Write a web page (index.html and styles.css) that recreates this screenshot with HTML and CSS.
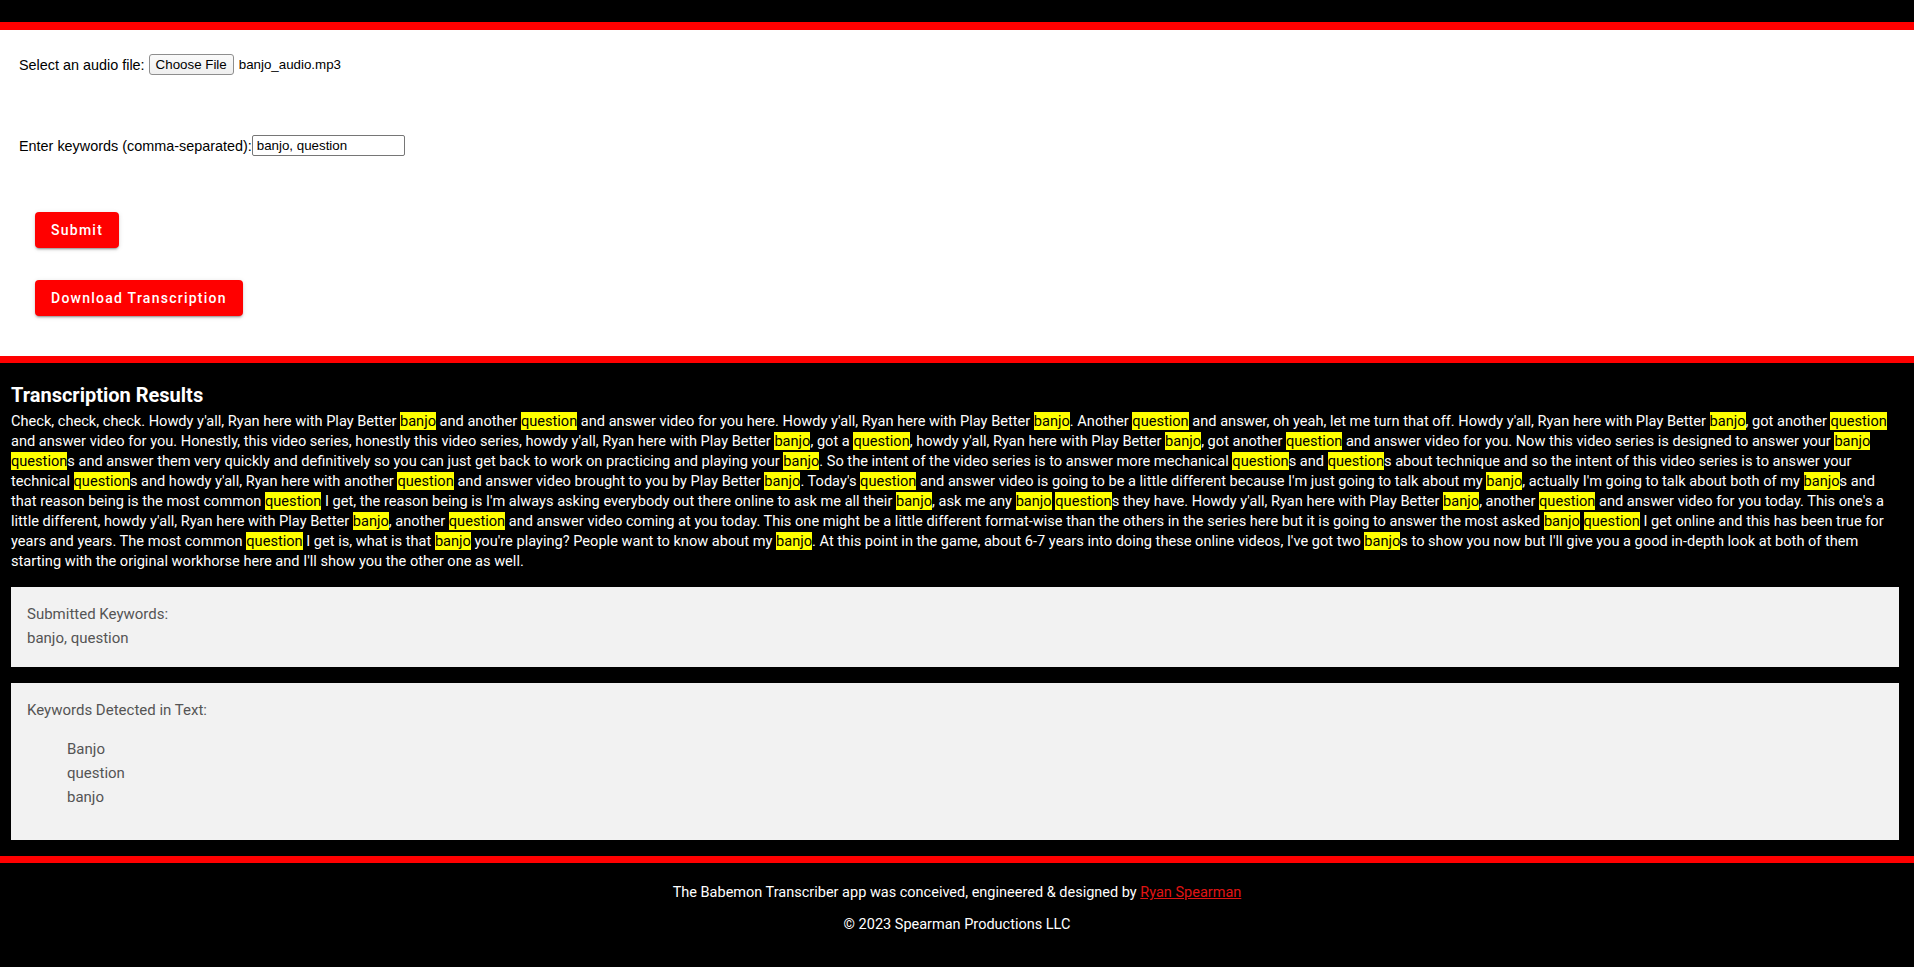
FILE: index.html
```html
<!DOCTYPE html>
<html lang="en">
<head>
<meta charset="utf-8">
<title>Babemon Transcriber</title>
<link rel="stylesheet" href="styles.css">
</head>
<body>
<header class="topbar"></header>

<main class="upload">
  <div class="field">
    <label class="field-label">Select an audio file:</label>
    <button type="button" class="file-btn">Choose File</button>
    <span class="file-name">banjo_audio.mp3</span>
  </div>
  <div class="field field-keywords">
    <label class="field-label label-tight" for="kw">Enter keywords (comma-separated):</label>
    <input id="kw" class="text-input" type="text" value="banjo, question">
  </div>
  <div class="actions">
    <button type="button" class="btn">Submit</button>
    <button type="button" class="btn">Download Transcription</button>
  </div>
</main>

<section class="results">
  <h2 class="results-title">Transcription Results</h2>
  <p class="transcript">Check, check, check. Howdy y'all, Ryan here with Play Better <mark class="hl">banjo</mark> and another <mark class="hl">question</mark> and answer video for you here. Howdy y'all, Ryan here with Play Better <mark class="hl">banjo</mark>. Another <mark class="hl">question</mark> and answer, oh yeah, let me turn that off. Howdy y'all, Ryan here with Play Better <mark class="hl">banjo</mark>, got another <mark class="hl">question</mark> and answer video for you. Honestly, this video series, honestly this video series, howdy y'all, Ryan here with Play Better <mark class="hl">banjo</mark>, got a <mark class="hl">question</mark>, howdy y'all, Ryan here with Play Better <mark class="hl">banjo</mark>, got another <mark class="hl">question</mark> and answer video for you. Now this video series is designed to answer your <mark class="hl">banjo</mark> <mark class="hl">question</mark>s and answer them very quickly and definitively so you can just get back to work on practicing and playing your <mark class="hl">banjo</mark>. So the intent of the video series is to answer more mechanical <mark class="hl">question</mark>s and <mark class="hl">question</mark>s about technique and so the intent of this video series is to answer your technical <mark class="hl">question</mark>s and howdy y'all, Ryan here with another <mark class="hl">question</mark> and answer video brought to you by Play Better <mark class="hl">banjo</mark>. Today's <mark class="hl">question</mark> and answer video is going to be a little different because I'm just going to talk about my <mark class="hl">banjo</mark>, actually I'm going to talk about both of my <mark class="hl">banjo</mark>s and that reason being is the most common <mark class="hl">question</mark> I get, the reason being is I'm always asking everybody out there online to ask me all their <mark class="hl">banjo</mark>, ask me any <mark class="hl">banjo</mark> <mark class="hl">question</mark>s they have. Howdy y'all, Ryan here with Play Better <mark class="hl">banjo</mark>, another <mark class="hl">question</mark> and answer video for you today. This one's a little different, howdy y'all, Ryan here with Play Better <mark class="hl">banjo</mark>, another <mark class="hl">question</mark> and answer video coming at you today. This one might be a little different format-wise than the others in the series here but it is going to answer the most asked <mark class="hl">banjo</mark> <mark class="hl">question</mark> I get online and this has been true for years and years. The most common <mark class="hl">question</mark> I get is, what is that <mark class="hl">banjo</mark> you're playing? People want to know about my <mark class="hl">banjo</mark>. At this point in the game, about 6-7 years into doing these online videos, I've got two <mark class="hl">banjo</mark>s to show you now but I'll give you a good in-depth look at both of them starting with the original workhorse here and I'll show you the other one as well.</p>

  <div class="panel">
    <div class="panel-title">Submitted Keywords:</div>
    <div class="panel-value">banjo, question</div>
  </div>

  <div class="panel panel-detected">
    <div class="panel-title">Keywords Detected in Text:</div>
    <ul class="kw-list">
      <li>Banjo</li>
      <li>question</li>
      <li>banjo</li>
    </ul>
  </div>
</section>

<footer class="footer">
  <p class="footer-line">The Babemon Transcriber app was conceived, engineered &amp; designed by <a class="footer-link" href="#">Ryan Spearman</a></p>
  <p class="footer-line footer-copy">© 2023 Spearman Productions LLC</p>
</footer>
</body>
</html>
```

FILE: styles.css
```css
* {
  box-sizing: border-box;
}

html, body {
  margin: 0;
  padding: 0;
}

body {
  background: #ffffff;
  font-family: Roboto, "Liberation Sans", Arial, sans-serif;
  color: #000;
}

.topbar {
  height: 30px;
  background: #000;
  border-bottom: 8px solid #ff0000;
}

/* upload form */
.upload {
  display: flex;
  flex-direction: column;
  align-items: flex-start;
  padding: 24px 0 40px 19px;
  background: #fff;
}

.field {
  display: flex;
  align-items: center;
  height: 21px;
}

.field-keywords {
  margin-top: 60px;
}

.field-label {
  font-family: "Liberation Sans", Arial, sans-serif;
  font-size: 14.4px;
  color: #000;
  margin-right: 4px;
}

.label-tight {
  margin-right: 0;
}

.file-btn {
  font-family: "Liberation Sans", Arial, sans-serif;
  font-size: 13.33px;
  color: #000;
  height: 21px;
  padding: 1px 6px;
  background: linear-gradient(#fafafa, #efefef);
  border: 1px solid #8e8e8e;
  border-radius: 3px;
  margin: 0;
}

.file-name {
  font-family: "Liberation Sans", Arial, sans-serif;
  font-size: 13.33px;
  margin-left: 5px;
}

.text-input {
  font-family: "Liberation Sans", Arial, sans-serif;
  font-size: 13.33px;
  width: 153px;
  height: 21px;
  padding: 1px 4px;
  border: 1px solid #767676;
  border-radius: 2px;
  color: #000;
  background: #fff;
}

.actions {
  display: flex;
  flex-direction: column;
  align-items: flex-start;
  gap: 32px;
  margin-top: 56px;
  padding-left: 16px;
}

.btn {
  height: 36px;
  padding: 0 16px;
  border: none;
  border-radius: 4px;
  background: #ff0000;
  color: #fff;
  font-family: Roboto, sans-serif;
  font-size: 14px;
  font-weight: 500;
  letter-spacing: 1.25px;
  box-shadow: 0 3px 1px -2px rgba(0,0,0,.2), 0 2px 2px 0 rgba(0,0,0,.14), 0 1px 5px 0 rgba(0,0,0,.12);
}

/* results */
.results {
  background: #000;
  border-top: 7px solid #ff0000;
  padding: 20px 15px 16px 11px;
  color: #fff;
}

.results-title {
  margin: 0;
  font-size: 20px;
  font-weight: 700;
  line-height: 24px;
}

.transcript {
  margin: 4px 0 16px;
  font-size: 14.6px;
  line-height: 20px;
}

.hl {
  background: #ffff00;
  color: #000;
  padding: 0;
}

.panel {
  background: #f2f2f2;
  color: #555;
  font-size: 15px;
  line-height: 24px;
  padding: 15px 16px 17px;
}

.panel + .panel {
  margin-top: 16px;
}

.kw-list {
  list-style: none;
  margin: 15px 0 14px;
  padding-left: 40px;
}

/* footer */
.footer {
  background: #000;
  border-top: 7px solid #ff0000;
  padding: 20px 0 32px;
  text-align: center;
  color: #fff;
  font-size: 14.5px;
  line-height: 20px;
}

.footer-line {
  margin: 0;
}

.footer-copy {
  margin-top: 12px;
}

.footer-link {
  color: #e01414;
  text-decoration: underline;
}
```
